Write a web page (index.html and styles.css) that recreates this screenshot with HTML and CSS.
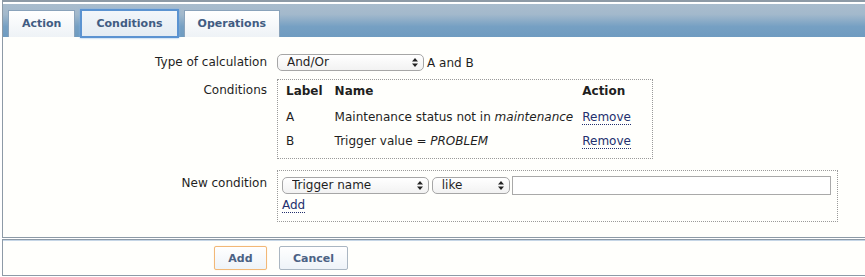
FILE: index.html
```html
<!DOCTYPE html>
<html lang="en">
<head>
    <meta charset="UTF-8">
    <title>Configuration of actions</title>
    <link rel="stylesheet" href="styles.css">
</head>
<body>
    <div class="panel">
        <div class="tabs">
            <a class="tab" href="#">Action</a>
            <a class="tab active" href="#">Conditions</a>
            <a class="tab" href="#">Operations</a>
        </div>

        <form class="form">
            <div class="form-row">
                <label class="form-label">Type of calculation</label>
                <div class="form-field inline">
                    <span class="select-wrap w-calc">
                        <select><option>And/Or</option></select>
                        <svg class="arrows" width="6" height="9" viewBox="0 0 6 9"><path d="M3 0 L6 3.5 H0 Z M3 9 L6 5.5 H0 Z" fill="#222"/></svg>
                    </span>
                    <span class="formula">A and B</span>
                </div>
            </div>

            <div class="form-row">
                <label class="form-label pad-cond">Conditions</label>
                <div class="form-field">
                    <div class="box conditions">
                        <table class="cond-table">
                            <thead>
                                <tr><th>Label</th><th>Name</th><th>Action</th></tr>
                            </thead>
                            <tbody>
                                <tr>
                                    <td>A</td>
                                    <td>Maintenance status not in <em>maintenance</em></td>
                                    <td><a class="link" href="#">Remove</a></td>
                                </tr>
                                <tr>
                                    <td>B</td>
                                    <td>Trigger value = <em>PROBLEM</em></td>
                                    <td><a class="link" href="#">Remove</a></td>
                                </tr>
                            </tbody>
                        </table>
                    </div>
                </div>
            </div>

            <div class="form-row">
                <label class="form-label pad-new">New condition</label>
                <div class="form-field">
                    <div class="box new-cond">
                        <div class="inline">
                            <span class="select-wrap w-type">
                                <select><option>Trigger name</option></select>
                                <svg class="arrows" width="6" height="9" viewBox="0 0 6 9"><path d="M3 0 L6 3.5 H0 Z M3 9 L6 5.5 H0 Z" fill="#222"/></svg>
                            </span>
                            <span class="select-wrap w-op">
                                <select><option>like</option></select>
                                <svg class="arrows" width="6" height="9" viewBox="0 0 6 9"><path d="M3 0 L6 3.5 H0 Z M3 9 L6 5.5 H0 Z" fill="#222"/></svg>
                            </span>
                            <input class="text-input" type="text">
                        </div>
                        <a class="link add-link" href="#">Add</a>
                    </div>
                </div>
            </div>
        </form>
    </div>

    <div class="panel footer">
        <div class="form-row">
            <div class="form-label"><button class="btn main" type="button">Add</button></div>
            <div class="form-field"><button class="btn cancel" type="button">Cancel</button></div>
        </div>
    </div>
</body>
</html>
```

FILE: styles.css
```css
* {
    margin: 0;
    padding: 0;
    box-sizing: border-box;
}

body {
    background-color: #fff;
    color: #1f1f1f;
    font-family: 'DejaVu Sans', Verdana, sans-serif;
    font-size: 12px;
}

.panel {
    margin-left: 2px;
    border: 1px solid #8d9aa6;
    border-right: none;
    background-color: #fffffc;
}

/* tab bar */
.tabs {
    display: flex;
    align-items: flex-end;
    gap: 5px;
    height: 36px;
    padding-left: 5px;
    border-top: 1px solid #8d9aa6;
    box-shadow: inset 0 1px 0 #fff;
    background: linear-gradient(#fff 0, #fff 2px, #a9bccd 2px, #a3b9cc 35%, #76a0c3 70%, #6f9bc0);
}

.tab {
    display: block;
    height: 27px;
    line-height: 26px;
    padding: 0 13px;
    color: #415c82;
    font-weight: bold;
    font-size: 11px;
    text-decoration: none;
    background: linear-gradient(#ffffff, #eef2f6);
    border: 1px solid #8aa3bb;
    border-bottom: none;
}

.tab.active {
    height: 29px;
    line-height: 26px;
    padding: 0 14px;
    margin-bottom: -1px;
    background: linear-gradient(#f2f6fa, #e4ecf3);
    border: 2px solid #5b93d1;
    box-shadow: 0 0 2px #7fb0e6;
}

/* form */
.form {
    padding: 17px 0 15px;
}

.form-row {
    display: grid;
    grid-template-columns: 264px 1fr;
    column-gap: 10px;
    margin-bottom: 8px;
}

.form-row:last-child {
    margin-top: 11px;
    margin-bottom: 0;
}

.form-label {
    text-align: right;
    line-height: 17px;
}

.form-label.pad-cond {
    padding-top: 3px;
}

.form-label.pad-new {
    padding-top: 5px;
}

.inline {
    display: flex;
    align-items: center;
}

.select-wrap {
    position: relative;
    display: inline-block;
}

.select-wrap select {
    -webkit-appearance: none;
    appearance: none;
    display: block;
    width: 100%;
    height: 17px;
    padding: 0 0 0 9px;
    border: 1px solid #a6a6a6;
    border-radius: 5px;
    background: linear-gradient(#ffffff, #f2f2f2);
    font-family: 'DejaVu Sans', Verdana, sans-serif;
    font-size: 12px;
    line-height: 15px;
    color: #1f1f1f;
}

.select-wrap .arrows {
    position: absolute;
    right: 6px;
    top: 4px;
}

.w-calc {
    width: 147px;
}

.w-type {
    width: 147px;
}

.w-op {
    width: 78px;
    margin-left: 3px;
}

.formula {
    margin-left: 3px;
}

.box {
    border: 1px dotted #9a9a9a;
}

.conditions {
    width: 376px;
    padding: 0 8px 6px;
}

.cond-table {
    border-collapse: collapse;
}

.cond-table th {
    text-align: left;
    font-weight: bold;
    height: 24px;
    padding: 0 9px 2px 0;
}

.cond-table td {
    height: 24px;
    padding: 2px 9px 0 0;
}

.cond-table th:first-child,
.cond-table td:first-child {
    padding-right: 12px;
}

.cond-table th:last-child,
.cond-table td:last-child {
    padding-right: 0;
}

.link {
    color: #23306e;
    text-decoration: none;
    border-bottom: 1px dotted #23306e;
}

.new-cond {
    width: 561px;
    padding: 5px 6px 8px 4px;
}

.new-cond .inline {
    height: 19px;
}

.text-input {
    width: 320px;
    height: 19px;
    margin-left: 2px;
    border: 1px solid #a9a9a9;
    background-color: #fff;
}

.add-link {
    display: inline-block;
    margin-top: 4px;
    line-height: 13px;
}

/* footer */
.footer {
    margin-top: 1px;
    padding: 6px 0 5px;
    box-shadow: inset 0 1px 0 #c6d6e6;
}

.footer .form-row {
    margin: 0;
}

.btn {
    height: 24px;
    padding: 0 13px;
    font-family: 'DejaVu Sans', Verdana, sans-serif;
    font-size: 11px;
    font-weight: bold;
    color: #4b6184;
    background: linear-gradient(#ffffff, #eef3f8);
    border: 1px solid #aab6c2;
    border-radius: 2px;
}

.btn.main {
    min-width: 53px;
    border-color: #f2b877;
    box-shadow: 0 0 1px #f8d6a8;
}

.btn.cancel {
    margin-left: 2px;
}
```
